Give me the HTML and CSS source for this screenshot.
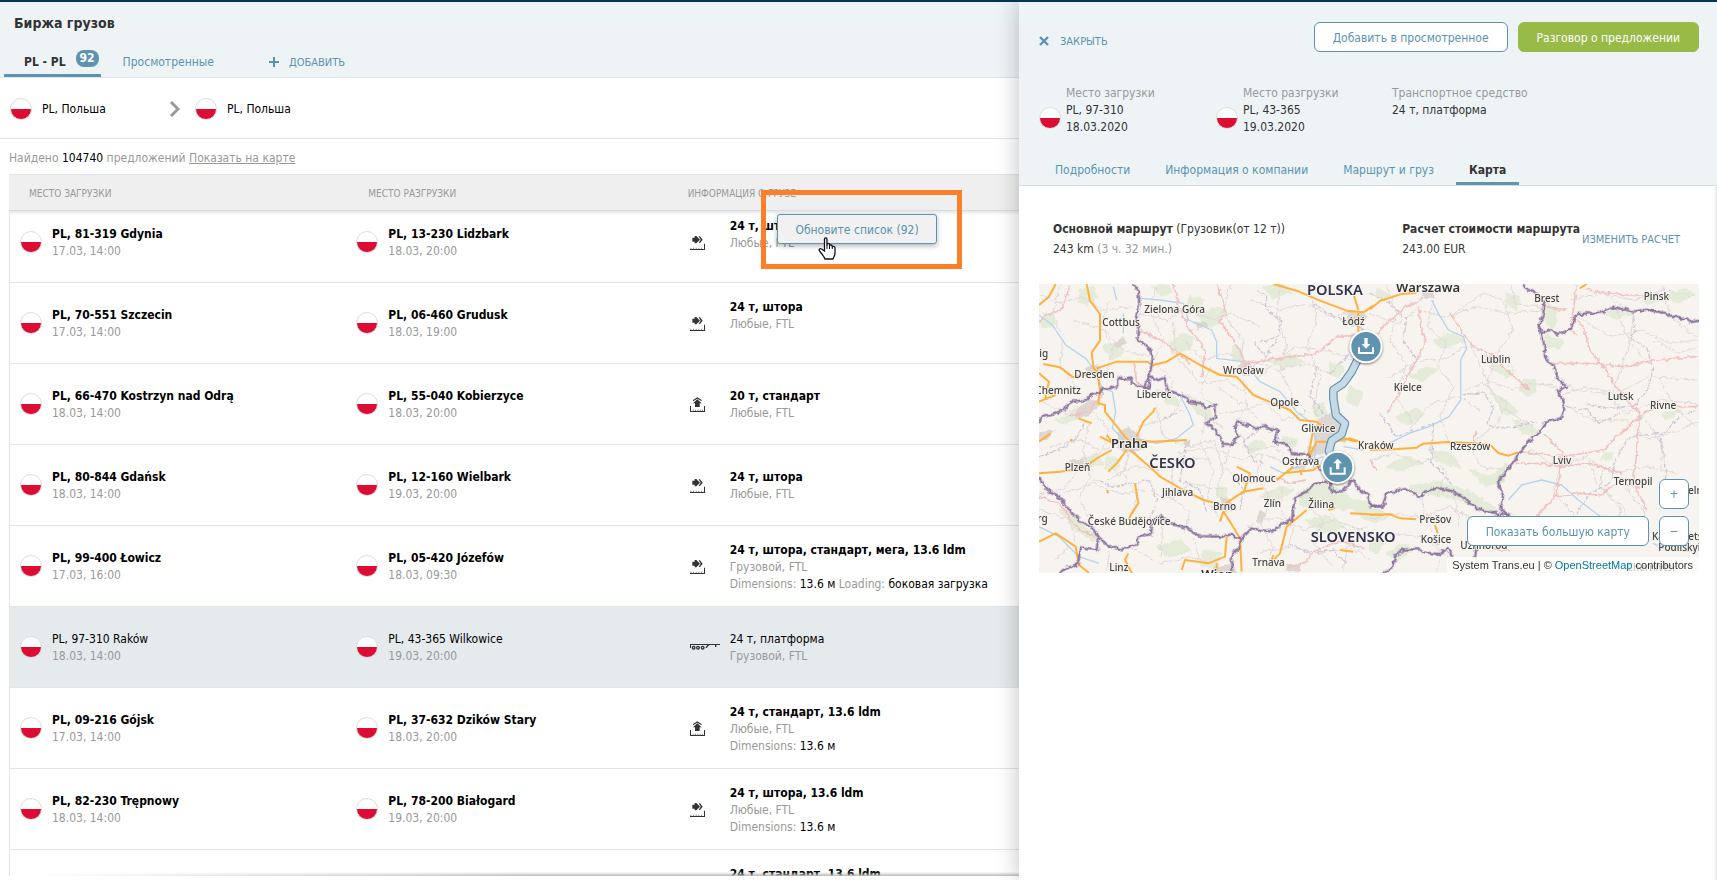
FILE: index.html
```html
<!DOCTYPE html>
<html lang="ru">
<head>
    <meta charset="UTF-8">
    <title>Биржа грузов</title>
    <link rel="stylesheet" href="styles.css">
</head>
<body>
    <svg class="sprite" aria-hidden="true">
        <symbol id="icon-side" viewBox="0 0 45 45">
            <path d="M7 8h7V3h5l11 11-11 11h-5v-5H7z"/>
            <path d="M26 4h4l8 10-8 10h-4l6-10z"/>
            <path d="M0 42h42V26h3v19H0z"/>
            <path class="ticks" d="M1 38h3v4H1zM9 38h3v4H9zM17 38h3v4h-3zM25 38h3v4h-3zM33 38h3v4h-3z"/>
        </symbol>
        <symbol id="icon-top" viewBox="0 0 45 45">
            <path d="M22 1l13 8v4L22 5 9 13V9z"/>
            <path d="M22 7l13 12h-6v11H15V19H9z"/>
            <path d="M0 27h3v15h39V27h3v18H0z"/>
            <path class="ticks" d="M8 38h3v4H8zM15 38h3v4h-3zM22 38h3v4h-3zM29 38h3v4h-3zM36 38h3v4h-3z"/>
        </symbol>
        <symbol id="icon-platform" viewBox="0 0 90 24">
            <path d="M0 3h90v3H58l-8 9-4-1 6-8H3v9H0zM75 6h4v6h-4z"/>
            <g fill="none" stroke="#333" stroke-width="4"><circle cx="11" cy="14" r="4"/><circle cx="24" cy="14" r="4"/><circle cx="38" cy="14" r="4"/></g>
        </symbol>
    </svg>
    <div class="page">
        <main class="list">
            <header class="list-header">
                <h1>Биржа грузов</h1>
                <nav class="tabs">
                    <a href="#" class="tab active">PL - PL <span class="count">92</span></a>
                    <a href="#" class="tab">Просмотренные</a>
                    <button class="add-btn"><svg width="10" height="10" viewBox="0 0 10 10"><path d="M4 0h2v4h4v2H6v4H4V6H0V4h4z"/></svg>ДОБАВИТЬ</button>
                </nav>
            </header>
            <div class="route-filter">
                <div class="point"><span class="flag"></span>PL, Польша</div>
                <svg class="chevron" width="11" height="18" viewBox="0 0 11 18"><path d="M2 2l7 7-7 7" fill="none" stroke="#999" stroke-width="3"/></svg>
                <div class="point"><span class="flag"></span>PL, Польша</div>
            </div>
            <p class="found">Найдено <span>104740</span> предложений <a href="#">Показать на карте</a></p>
            <div class="offers-wrap">
                <table class="offers">
                    <thead>
                        <tr>
                            <th class="col-from">МЕСТО ЗАГРУЗКИ</th>
                            <th class="col-to">МЕСТО РАЗГРУЗКИ</th>
                            <th class="col-cargo">ИНФОРМАЦИЯ О ГРУЗЕ</th>
                        </tr>
                    </thead>
                    <tbody>
                        <tr class="scrolled">
                            <td><div class="place"><span class="flag"></span><div><b>PL, 81-319 Gdynia</b><br>17.03, 14:00</div></div></td>
                            <td><div class="place"><span class="flag"></span><div><b>PL, 13-230 Lidzbark</b><br>18.03, 20:00</div></div></td>
                            <td><div class="cargo"><svg class="load-icon"><use href="#icon-side"/></svg><div><b>24 т, штора</b><br>Любые, FTL<br>&nbsp;</div></div></td>
                        </tr>
                        <tr>
                            <td><div class="place"><span class="flag"></span><div><b>PL, 70-551 Szczecin</b><br>17.03, 14:00</div></div></td>
                            <td><div class="place"><span class="flag"></span><div><b>PL, 06-460 Grudusk</b><br>18.03, 19:00</div></div></td>
                            <td><div class="cargo"><svg class="load-icon"><use href="#icon-side"/></svg><div><b>24 т, штора</b><br>Любые, FTL<br>&nbsp;</div></div></td>
                        </tr>
                        <tr>
                            <td><div class="place"><span class="flag"></span><div><b>PL, 66-470 Kostrzyn nad Odrą</b><br>18.03, 14:00</div></div></td>
                            <td><div class="place"><span class="flag"></span><div><b>PL, 55-040 Kobierzyce</b><br>18.03, 20:00</div></div></td>
                            <td><div class="cargo"><svg class="load-icon"><use href="#icon-top"/></svg><div><b>20 т, стандарт</b><br>Любые, FTL</div></div></td>
                        </tr>
                        <tr>
                            <td><div class="place"><span class="flag"></span><div><b>PL, 80-844 Gdańsk</b><br>18.03, 14:00</div></div></td>
                            <td><div class="place"><span class="flag"></span><div><b>PL, 12-160 Wielbark</b><br>19.03, 20:00</div></div></td>
                            <td><div class="cargo"><svg class="load-icon"><use href="#icon-side"/></svg><div><b>24 т, штора</b><br>Любые, FTL</div></div></td>
                        </tr>
                        <tr>
                            <td><div class="place"><span class="flag"></span><div><b>PL, 99-400 Łowicz</b><br>17.03, 16:00</div></div></td>
                            <td><div class="place"><span class="flag"></span><div><b>PL, 05-420 Józefów</b><br>18.03, 09:30</div></div></td>
                            <td><div class="cargo"><svg class="load-icon"><use href="#icon-side"/></svg><div><b>24 т, штора, стандарт, мега, 13.6 ldm</b><br>Грузовой, FTL<br>Dimensions: <span>13.6 м</span> Loading: <span>боковая загрузка</span></div></div></td>
                        </tr>
                        <tr class="selected">
                            <td><div class="place"><span class="flag"></span><div><b>PL, 97-310 Raków</b><br>18.03, 14:00</div></div></td>
                            <td><div class="place"><span class="flag"></span><div><b>PL, 43-365 Wilkowice</b><br>19.03, 20:00</div></div></td>
                            <td><div class="cargo"><svg class="load-icon platform"><use href="#icon-platform"/></svg><div><b>24 т, платформа</b><br>Грузовой, FTL</div></div></td>
                        </tr>
                        <tr>
                            <td><div class="place"><span class="flag"></span><div><b>PL, 09-216 Gójsk</b><br>17.03, 14:00</div></div></td>
                            <td><div class="place"><span class="flag"></span><div><b>PL, 37-632 Dzików Stary</b><br>18.03, 20:00</div></div></td>
                            <td><div class="cargo"><svg class="load-icon"><use href="#icon-top"/></svg><div><b>24 т, стандарт, 13.6 ldm</b><br>Любые, FTL<br>Dimensions: <span>13.6 м</span></div></div></td>
                        </tr>
                        <tr>
                            <td><div class="place"><span class="flag"></span><div><b>PL, 82-230 Trępnowy</b><br>18.03, 14:00</div></div></td>
                            <td><div class="place"><span class="flag"></span><div><b>PL, 78-200 Białogard</b><br>19.03, 20:00</div></div></td>
                            <td><div class="cargo"><svg class="load-icon"><use href="#icon-side"/></svg><div><b>24 т, штора, 13.6 ldm</b><br>Любые, FTL<br>Dimensions: <span>13.6 м</span></div></div></td>
                        </tr>
                        <tr>
                            <td></td>
                            <td></td>
                            <td><div class="cargo"><svg class="load-icon"></svg><div><b>24 т, стандарт, 13.6 ldm</b><br>&nbsp;<br>&nbsp;</div></div></td>
                        </tr>
                    </tbody>
                </table>
            </div>
            <div class="highlight"></div>
            <button class="refresh-btn">Обновите список (92)</button>
            <svg class="hand" width="18" height="23" viewBox="0 0 18 23">
                <path d="M6.500 14V2.500C6.500 .3 9 .3 9 2.500V9 7.500c0-1.500 2.500-1.500 2.500 0V9c0-1.500 2.700-1.300 2.700.3v1c0-1.400 2.800-1.200 2.800.5V16c0 3-1.500 4-2 6H7c-.5-2-3-5-5.500-8-1-1.500.5-3 2-2z" fill="#fff" stroke="#112" stroke-width="1.300"/>
                <path d="M9 9v3M11.500 9v3M14.300 10v2" stroke="#112"/>
            </svg>
        </main>
        <aside class="drawer">
            <header class="drawer-header">
                <div class="actions">
                    <button class="close-btn"><svg width="10" height="10" viewBox="0 0 10 10"><path d="M1 1l8 8M9 1l-8 8" stroke="#5b93b0" stroke-width="2.400"/></svg>ЗАКРЫТЬ</button>
                    <button class="btn">Добавить в просмотренное</button>
                    <button class="btn green">Разговор о предложении</button>
                </div>
                <div class="summary">
                    <div class="stop"><span class="flag"></span><div><em>Место загрузки</em><br>PL, 97-310<br>18.03.2020</div></div>
                    <div class="stop"><span class="flag"></span><div><em>Место разгрузки</em><br>PL, 43-365<br>19.03.2020</div></div>
                    <div><em>Транспортное средство</em><br>24 т, платформа</div>
                </div>
                <nav class="drawer-tabs">
                    <a href="#">Подробности</a>
                    <a href="#">Информация о компании</a>
                    <a href="#">Маршрут и груз</a>
                    <a href="#" class="active">Карта</a>
                </nav>
            </header>
            <section class="route">
                <div class="route-main"><b>Основной маршрут</b> (Грузовик(от 12 т))<br>243 km <em>(3 ч. 32 мин.)</em></div>
                <div class="route-cost"><b>Расчет стоимости маршрута</b><br>243.00 EUR</div>
                <button class="recalc-btn">ИЗМЕНИТЬ РАСЧЕТ</button>
            </section>
            <div class="map">
                <svg class="map-canvas" viewBox="27 12 1980 867" preserveAspectRatio="xMidYMid slice">
                    <!-- makes hand-drawn lines wander like real coastlines and roads -->
                    <filter id="wander" x="0" y="0" width="100%" height="100%">
                        <feTurbulence type="fractalNoise" baseFrequency="0.06" numOctaves="3" seed="4"/>
                        <feDisplacementMap in="SourceGraphic" scale="16" xChannelSelector="R" yChannelSelector="G"/>
                    </filter>
                    <rect x="27" y="12" width="1980" height="867" fill="#f7f4ef"/>
                    <g filter="url(#wander)">
                    <!-- forests -->
                    <g class="forest">
                        <path d="M150 30l40-10 10 30-30 25-25-10zM370 20l40-8 15 20-30 15zM480 50l40 10-10 40-35-5zM420 185l40-25 30 15-10 30-50 15zM510 110l50-30 25 10-15 40-40 10zM40 100l30 5 5 30-40 10zM220 200l40-10 20 30-35 20zM610 200l20 5 10 30-30 10zM700 20l60-5 20 20-50 20zM720 240l60-15 40 20-60 20zM380 330l50 20 20 25-40-5zM480 350l50 30 20 40-45-20zM80 420l60-30 50-10-40 35-50 15zM150 540l50-20 20 30-50 15zM230 530l40 10-10 30-35-5zM90 690l50 20 30 40 40 20-20 15-60-40zM380 800l70-20 30 30-60 20zM520 810l50 10-10 40-45-5zM640 500l50-20 20 20-50 20zM690 650l60-30 40 10-50 30zM560 620l30 5-5 30-25-5zM800 640l70-30 60 20 60 50-50 10-60-20-60 10zM830 720l60-10 50 30-70 20zM900 250l40 10-10 30-30-5zM850 380l30-10 10 30-30 10zM760 470l40 10-10 20-35-5zM960 320l40 20-20 40-30-20zM960 660l60 10 60 40-50 20-50-30z"/>
                        <path transform="translate(1020)" d="M20 25l40 20-10 15-35-15zM190 180l60-20 30 25-60 20zM410 45l40 5-10 35-30-10zM530 65l30 25-10 60-25-30zM530 165l50 20-10 20-40-5zM710 100l60-15 15 20-50 10zM820 60l40-20 15 20-40 10zM890 45l60-20 20 20-50 25zM120 290l50-30 30 10-40 30zM370 250l60 30-20 10-45-25zM455 300l40 0 5 35-30 15-20-20zM80 410l60-25 20 20-50 30zM370 340l50 30 20 30-40 0zM430 420l50 20 30 20-50 0zM180 510l60 10 30 40-60-15zM50 560l60-30 50 20-70 20zM300 570l60 20 50-40-10 60-60 5zM120 620l80-15 100 30 80 55-30 5-90-40-120-20zM330 725l30 10-10 30-25-10zM700 520l30 0-10 20-25-5zM880 400l50-10-20 20-25 5zM50 820l50-30 30 20-50 30zM0 760l40 30-20 30-20-10zM470 710l60 20 50 60-50-20z"/>
                    </g>
                    <!-- towns -->
                    <g class="town">
                        <path d="M265 455l35-15 30 30 10 40-60 10-20-25zM140 385l50-30 25 15-40 40-40 5zM165 265l40-15 10 20-40 15zM490 125l40 0 5 15-35 10zM620 255l30-15 25 25-20 25-30-10zM860 420l40-20 40 30 10 60-30-10-40 30-30-30zM950 100l40-8 20 20-25 30-30-5zM570 650l35 10 5 30-30 5zM830 500l40-10 20 30-50 10zM690 690l20 10-20 35-10-20zM250 190l30-20 10 20-30 15zM27 455l50-5-30 30-20 5zM120 540l40 0 10 30-40 0zM800 545l30 10-10 20-30-5zM550 860l60-10 10 29-70 0zM770 855l40 0 0 15-40 5zM465 480l15 0 0 25-15 0z"/>
                        <path transform="translate(1020)" d="M155 35l30-5 10 20-30 10zM350 225l20 5-5 20-20-5zM560 545l30-10 10 25-30 5zM740 335l20 0 5 20-20 0zM190 770l20 5-5 20-20-5zM800 405l20 0 0 15-20 0zM300 490l25-8 15 12-30 10z"/>
                    </g>
                    <!-- local roads -->
                    <g class="minor">
                        <path d="M27 40l60 30 70-20 60 40 90-10M90 12l-20 90 30 80-10 70 60 80M130 120l90 30 60 60 80 20M240 60l-30 80 40 60-20 80M330 100l80 20 50-30 90 30 50-20 90 40M380 12l-20 80 40 90-30 60 60 60-20 60M460 180l60 60 70-20 60 30M430 130l10 100 70 80 80-10 60 40M600 12l-20 90 60 80-10 70M660 60l90 30 80-20 70 40 50-10M750 12l-10 90 30 90-20 80 40 80 50 50M840 30l20 90-30 80 40 90-20 90 30 60M660 240l80 30 90-20 70 30M680 300l60-60 60-40 90 10 80 30M540 260l-30 80 60 60 80-10 60-30M640 300l10 80-40 60 50 70 80-10 40 50M700 360l60 60 70-20M560 320l90 60 80 90 70 20"/>
                        <path d="M27 360l80 40 60-30 70 80-20 60-70 60-50 60-90 20M60 500l90-20 60 30 60-10M180 420l-20 90 20 80-30 60 30 80M230 600l80-40 80 10 60-40 90 10M300 500l-20 80 40 70-20 70M100 640l90-30 80 30 70-10 100 30M360 520l70 50-10 80 60 50-20 60M330 440l90-30 50-70 30 60 80 40M380 380l20 90 80 30 70-20 30 90-20 60 30 70M440 520l100-20 90 40 70-20 90 40M530 400l-20 90 40 80-20 90 50 70M600 490l-20 70 60 50 90-20 60 20M420 660l60-50 100 20M700 520l-20 60 40 80-30 70 40 70-20 70M650 740l90-30 80 40 90-30 90 30M760 620l-10 70 40 60-20 60M820 660l60 60-30 70 60 70M900 700l60 60 50-20M27 690l90 30 20 60-60 60M240 810l-10 60M300 800l90 50 90-20 60 20M400 730l-10 100M490 770l20 80M680 820l90-20 100 20 90-20 60 40M960 760l-20 110"/>
                        <path transform="translate(1020)" d="M0 100l80 30 60-40 90 20 90-30 90 20 110-10M50 12l30 90-20 80 50 70-30 100 50 80M190 60l-20 80 60 50-30 70 50 60-40 90 30 90M250 100l90-60 60 20 30 90-50 70 60 60M290 195l-60 40-90 10-90 50M300 190l50 110 80 30 60-20 70 10M370 240l-20 80 40 60 100 60M280 330l60-20 70 60-30 60-60 50M120 450l60-80 90-20 60 40M190 430l-10 90 50 60-30 70M300 500l30 60 80 10-20 50M0 540l80-20 60 30 60-20M420 12l20 60 80 10M600 60l90-20 100 20 90-30 90 20M620 110l100 60 90-20 90 40 80-10M700 40l90 60-10 90 60 60M740 90l40 100-50 140 10 60M550 270l60 60 100 10 60 60 90-40 120 10M560 350l90-30 90 20 100-50 140 10M590 380l80 40 100 0 60 60 100-30 60-30M480 510l80 50 90-30 80 50 100-20 90 20M570 560l-20 80 60 60 40 60M650 520l30 90 80 70 20 80M760 610l60 80 0 60M700 560l-10 60 60 60-10 80M0 720l60-20 100 10 80-30 90 50M60 760l90 10 90 60M210 830l-10 40M160 650l0 60 40 60M250 640l20 100M420 700l90 60 80 0M830 420l50 80-10 80M880 20l20 90 80 60M850 180l80 40 50-20M870 300l50 90 60 50"/>
                    </g>
                    <g class="district">
                        <path d="M680 30l30 20-5 40 50 30-10 50-70 20 30 40M850 70l60 40 70 20 40 40M640 270l60-30 40-60M690 450l-50 30 30 60 30 10M400 420l60-30M27 530l60-20 50-30 30-60M190 600l60 20 110-20 20 60-20 60M610 590l30 40-10 60M860 260l-20 90 50 60M900 280l60-60M470 490l-20 110 60 30 20 70M780 790l60 30 70-10 40 40"/>
                        <path transform="translate(1020)" d="M0 40l60 30 50 50-10 60 40 60-30 50M280 345l60-10 30 50-20 50 60 10 90-20M790 95l5 60-15 20 50 30 20 60-15 60-40 50-60 10-90-10M590 380l60 10 40 40 60-30M870 460l-90 10-40 60-20 80-60 30-40 60M980 390l-50 20-60 60 20 100-15 90M30 400l50 70 110-40-5 120 60 60"/>
                    </g>
                    </g>
                    <!-- rivers -->
                    <g class="river">
                        <path d="M27 105l40 30 40 60 60 40 30 40 20 50 30 10 10 60-10 50 40 40 50 60M330 55l60 5 70 10 15 50 70 30 15 35 0 50 80 10 50 60 60 30 50 60 40 30 20 60-10 80M300 470l80 20 60-15 50-40-10-30-30-60M27 740l60 30 60 60 60 20M250 20l10 40M280 100l0 60M720 560l40 20 60-30 60-20M940 500l60 10"/>
                        <path transform="translate(1020)" d="M185 60l20 40 30 50 45 20 10 35-18 35 0 120-35 50-60 30-60 20-60 30M415 660l40-45 60-15 60 15 50 45 80 60M850 790l40 20 90 5"/>
                    </g>
                    <!-- main roads -->
                    <g class="primary" filter="url(#wander)">
                        <path d="M120 12l-20 70-60 30-13 20M430 12l15 60 30 70 50 70-10 80M560 12l30 90-20 20 60 90 20 50M330 150l80 40 70 60M640 255l30-10 120-15 70-10 60-50 70-5M900 540l60-10M120 410l60-20 40-50M27 650l60 20 60 80 50 20M740 590l30 20 60-10M770 865l60-20 20-30 80-30 70 20M310 250l10 50 30 30"/>
                        <path transform="translate(1020)" d="M0 190l50-60 60-50 50-25M145 80l10 60 12 40-25 60-30 50-30 60-30 50M240 100l40 60 30 40 50 20 60 60 60 50M620 12l-10 80-10 60M540 250l130 0 90 10 100-20 120-10M600 110l40 30 20 70 40 50 40 60 40 50 30 30M650 30l120 15 90 0M530 80l60 10M430 550l80 0 60 10 90-10 100 30M450 515l80 10 80 0 90-15 40-40 80-70 60-30M570 530l0 60-15 60-55 60M580 520l-60-60M550 650l80-10 60 5 60-40 60 20M810 400l-10 120-10 90 40 80M920 380l65 0M310 490l5-35M0 540l20 30M590 150l30 10M330 780l60 30 30 0"/>
                    </g>
                    <!-- motorways -->
                    <g class="motorway">
                        <path d="M27 75l30-25 20-38M170 12l10 50 30 40 0 80-25 35 5 45 10 15-70 15-40-30-50-10M200 265l60-20 90 0 20 10 40-10 40-25 60 35 60 30 50 5 50 55 60 25 50 20 30 30 50 5 30 25M200 270l10 60-5 40 20 5 0 20 60 75 20 20M320 470l20-45 30-30 5-12M310 480l60 5 100-5M145 415l40 15M27 485l35-25M120 480l8 0M210 470l40 20-20-25M300 510l70 60 20 20 70 40 60 30 60 15 60-40 60-10M245 510l-45 25-40 30-70 10-63 5M290 510l-30 40-25 25M570 725l10-30 20 30 30 50 5 100M315 610l10 60-20 30-10 20M230 630l5 10M27 280l30 25-10 40 0 10M27 365l50-20M27 785l50-25 60 40 10 55 30 24M295 820l-10 20 20 39M455 870l10-30 70 10 50-20 5-60M560 850l0 29M620 560l40 20-20 60M740 600l50-40M760 580l90-10 20-15M810 570l5 15M830 545l30-60 50 0 50-10 30 10M850 450l-15 75M730 12l70 20 70 30 80 30 50 5 30-20M985 92l0 70M970 40l15 50M830 690l-60 50-20 80-30 30M895 690l20-5M960 700l100 5M940 475l40 10M930 810l40 5M730 825l-5 15"/>
                        <path transform="translate(1020)" d="M0 88l30-25 60-20 50-5M0 510l70-2 70-5 20-12 70-5 70 3 60 5 25 25 30 8 30-10M0 705l60-2 30 12 48 3M195 735l8 25M630 25l20-13"/>
                    </g>
                    <!-- state borders -->
                    <g class="border" filter="url(#wander)">
                        <path d="M308 12l17 18 3 45-10 35 7 15-3 55 33 20 13 35-10 55-18 33-38-13 0-18-20 8-20-8 0 25-22 8-20 0-12 15-25 5-15 15-40 5-25 20-20 15-45 10-15 17-33 0"/>
                        <path d="M340 320l18 3 2-33 25 10 18-7 10 37 42 15 30 22 28 3 14 14 30-10 0 38-30 18 30 20 25 45 20 0 25-28-15-28 15-13 55 20 20-10 20 12 22 0-12 38 38 8 15 25 50 5 35 45 25 25 10 40 35 0 30-35 15 30 30 15 5 35 35 0"/>
                        <path d="M890 605l-40 7-20 23-35 20-10 65-35 15-20 20-35-5-30-5-30 30-10 30-20 20 2 54"/>
                        <path d="M27 590l20 35 45 30 25 35 35 35 28 10 25 35 30 28 40 10 45-15 8-25 35-5 5-40 25-15 20 20 55 15 40 25 70 2 25-7 12 12 25-2M205 760l-5 50-50-5-5 45-45 20-15 9"/>
                        <path transform="translate(1020)" d="M0 675l38 5 10-38 32-10 25-8 45 30 15-20 40-10 45 10 48 33 45 28 40 5 35 6M42 879l28-20 5-30 25-20 50-2 10 10 50 5 20-15 20 20M320 795l-5 40"/>
                        <path transform="translate(1020)" d="M460 12l5 13 35 15 22 30-2 35-13 25 8 30 8 40 2 30 28 35 14 38 24 17-28 12 20 38-10 45-43 10-22 30-45 45-45 60-34 48 15 37-5 45 24 20-12 10M515 160l30-10 20 15 35-18 20-45 70-4 45-16 55 12 40-5 50 9 50 18 25 0 10 10 22-4"/>
                    </g>
                    <g class="track">
                        <path class="outer" d="M985 235l-20 40-25 35-30 20 0 25 8 50 27 25-10 32-30 20-8 30 15 40"/>
                        <path class="inner" d="M985 235l-20 40-25 35-30 20 0 25 8 50 27 25-10 32-30 20-8 30 15 40"/>
                    </g>
                    <g class="city">
                        <text x="343" y="99">Zielona Góra</text>
                        <text x="217" y="139">Cottbus</text>
                        <text x="28" y="231">ig</text>
                        <text x="133" y="294">Dresden</text>
                        <text x="16" y="341">Chemnitz</text>
                        <text x="320" y="354">Liberec</text>
                        <text x="579" y="281">Wrocław</text>
                        <text x="721" y="377">Opole</text>
                        <text x="937" y="136">Łódź</text>
                        <text x="814" y="457">Gliwice</text>
                        <text x="984" y="506">Kraków</text>
                        <text x="756" y="555">Ostrava</text>
                        <text x="607" y="605">Olomouc</text>
                        <text x="104" y="573">Plzeň</text>
                        <text x="396" y="647">Jihlava</text>
                        <text x="549" y="690">Brno</text>
                        <text x="701" y="682">Zlín</text>
                        <text x="835" y="683">Žilina</text>
                        <text x="173" y="735">České Budějovice</text>
                        <text x="22" y="727">rg</text>
                        <text x="238" y="873">Linz</text>
                        <text x="667" y="859">Trnava</text>
                        <text x="1091" y="332">Kielce</text>
                        <text x="1353" y="250">Lublin</text>
                        <text x="1513" y="65">Brest</text>
                        <text x="1841" y="61">Pinsk</text>
                        <text x="1733" y="360">Lutsk</text>
                        <text x="1860" y="387">Rivne</text>
                        <text x="1260" y="511">Rzeszów</text>
                        <text x="1568" y="553">Lviv</text>
                        <text x="1751" y="614">Ternopil</text>
                        <text x="1908" y="642">Khmeln</text>
                        <text x="1168" y="730">Prešov</text>
                        <text x="1172" y="788">Košice</text>
                        <text x="1291" y="807">Uzhhorod</text>
                        <text x="1866" y="779">Kamianets</text>
                        <text x="1885" y="814">Podilskyi</text>
                        <text x="1790" y="874">Chernivtsi</text>
                    </g>
                    <g class="capital">
                        <text x="243" y="504">Praha</text>
                        <text x="1098" y="37">Warszawa</text>
                        <text x="514" y="896">Wien</text>
                    </g>
                    <g class="country">
                        <text x="831" y="44">POLSKA</text>
                        <text x="358" y="563">ČESKO</text>
                        <text x="842" y="787">SLOVENSKO</text>
                    </g>
                    <g class="pin">
                        <circle cx="1008" cy="200" r="47"/>
                        <path d="M1003 174h10v18h8l-13 14-13-14h8zM984 202h6v14h36v-14h6v20h-48z"/>
                        <circle cx="923" cy="562" r="47"/>
                        <path d="M918 568h10v-18h8l-13-14-13 14h8zM899 562h6v16h36v-16h6v22h-48z"/>
                    </g>
                </svg>
                <div class="map-controls">
                    <button class="btn show-map">Показать большую карту</button>
                    <div class="zoom">
                        <button class="btn" aria-label="Приблизить">+</button>
                        <button class="btn" aria-label="Отдалить">−</button>
                    </div>
                </div>
                <div class="attribution">System Trans.eu | © <a href="#">OpenStreetMap</a> contributors</div>
            </div>
        </aside>
    </div>
</body>
</html>
```

FILE: styles.css
```css
* {
    box-sizing: border-box;
}
body {
    margin: 0;
    background: #fff;
    color: #333;
    font-family: Tahoma, "DejaVu Sans Condensed", "Noto Sans", sans-serif;
    font-size: 12px;
    line-height: 17px;
}
a {
    color: #5b93b0;
    text-decoration: none;
}
button {
    font-family: inherit;
    font-size: 12px;
    color: #5b93b0;
    background: none;
    border: none;
    padding: 0;
    cursor: pointer;
}
em {
    font-style: normal;
    color: #999;
}
.sprite {
    position: absolute;
    width: 0;
    height: 0;
}
.page {
    display: grid;
    grid-template-columns: 1019fr 698fr;
    height: 100vh;
    border-top: 2px solid #003653;
    overflow: hidden;
}
.flag {
    flex: none;
    width: 22px;
    height: 22px;
    border: 1px solid #ddd;
    border-radius: 50%;
    background: linear-gradient(#fff 50%, #dc0c33 50%);
}

/* offers list */
.list {
    position: relative;
    display: flex;
    flex-direction: column;
    min-width: 0;
    min-height: 0;
    padding-bottom: 4px;
}
.list-header {
    background: #eef4f6;
    border-bottom: 1px solid #dfe6eb;
    padding: 12px 4px 0;
}
h1 {
    margin: 0 0 18px 10px;
    font-size: 14px;
    line-height: 18px;
}
.tabs {
    display: flex;
    height: 27px;
}
.tab {
    padding: 4px 20px 0 22px;
}
.tab.active {
    display: flex;
    gap: 10px;
    padding: 4px 2px 0 20px;
    border-bottom: 3px solid #5f94b1;
    color: #333;
    font-weight: bold;
}
.count {
    height: 17px;
    margin-top: -4px;
    padding: 0 4px;
    border-radius: 8px;
    background: #5f94b1;
    color: #fff;
}
.add-btn {
    display: flex;
    align-items: center;
    gap: 10px;
    height: 24px;
    margin-left: 35px;
    font-size: 11px;
}
.add-btn svg {
    fill: #5b93b0;
}
.route-filter {
    display: flex;
    align-items: center;
    height: 61px;
    padding: 2px 0 0 10px;
    border-bottom: 1px solid #dfe6eb;
    color: #000;
}
.point {
    display: flex;
    align-items: center;
    gap: 10px;
}
.point:first-child {
    width: 159px;
}
.chevron {
    margin-right: 15px;
}
.found {
    margin: 11px 9px 7px;
    color: #999;
}
.found span {
    color: #000;
}
.found a {
    color: #999;
    text-decoration: underline;
}
.offers-wrap {
    position: relative;
    flex: 1;
    min-height: 0;
    margin-left: 9px;
    overflow: hidden;
}
.offers-wrap::after {
    content: "";
    position: absolute;
    inset: auto 0 0 20px;
    height: 4px;
    background: linear-gradient(transparent, #bbb);
    mask-image: linear-gradient(to right, transparent, #000 50%);
}
.offers {
    width: 100%;
    border-collapse: separate;
    border-spacing: 0;
    table-layout: fixed;
}
.offers th {
    height: 37px;
    padding: 2px 0 0 20px;
    background: #efefef;
    border-top: 1px solid #dfe6eb;
    border-bottom: 1px solid #d5dde2;
    color: #999;
    font-size: 10px;
    font-weight: normal;
    text-align: left;
}
.offers .col-from {
    width: 33.4%;
}
.offers .col-to {
    width: 33%;
    padding-left: 22px;
}
.offers .col-cargo {
    padding-left: 8px;
}
.offers thead {
    box-shadow: 0 2px 3px rgba(0, 0, 0, 0.1);
}
.offers td {
    height: 81px;
    padding: 0 0 0 10px;
    border-bottom: 1px solid #dfe6eb;
    color: #999;
    white-space: nowrap;
}
.offers td:first-child {
    border-left: 1px solid #dfe6eb;
}
.offers .scrolled td {
    height: 72px;
    padding-bottom: 9px;
}
.offers b,
.offers td div span {
    color: #000;
}
.place,
.cargo {
    display: flex;
    align-items: center;
    gap: 10px;
}
.place > div,
.cargo > div {
    padding-top: 2px;
}
.load-icon {
    flex: none;
    width: 15px;
    height: 15px;
    margin-right: 15px;
    fill: #333;
}
.load-icon.platform {
    width: 30px;
    height: 8px;
    margin-right: 0;
}
.ticks {
    fill: #888;
}
.selected td {
    background: #e5eaed;
}
.selected b {
    font-weight: normal;
}

/* floating refresh button */
.highlight {
    position: absolute;
    left: 761px;
    top: 188px;
    width: 201px;
    height: 79px;
    border: 5px solid #ff7f27;
}
.refresh-btn {
    position: absolute;
    left: 777px;
    top: 212px;
    width: 160px;
    height: 30px;
    padding-top: 2px;
    background: #f1f1f1;
    border: 1px solid #5b93b0;
    border-radius: 3px;
    box-shadow: 0 2px 5px rgba(0, 0, 0, 0.3);
}
.hand {
    position: absolute;
    left: 818px;
    top: 235px;
}

/* offer drawer */
.drawer {
    position: relative;
    min-width: 0;
    background: #fff;
    box-shadow: 0 0 22px rgba(0, 0, 0, 0.25), inset -3px 0 3px -2px #ddd;
}
.drawer-header {
    padding: 20px 18px 0 20px;
    background: #eef4f6;
    border-bottom: 1px solid #d3dde2;
}
.actions {
    display: flex;
    gap: 10px;
}
.close-btn {
    display: flex;
    align-items: center;
    gap: 11px;
    margin: 8px auto 0 0;
    font-size: 11px;
}
.btn {
    height: 30px;
    padding: 2px 18px 0;
    background: #fff;
    border: 1px solid #5b93b0;
    border-radius: 6px;
}
.btn.green {
    background: #98ba47;
    border-color: #98ba47;
    color: #fff;
}
.summary {
    display: grid;
    grid-template-columns: 177px 176px 1fr;
    margin-top: 33px;
}
.stop {
    display: flex;
    align-items: flex-end;
    gap: 5px;
}
.stop .flag {
    margin-bottom: 7px;
}
.drawer-tabs {
    display: flex;
    gap: 9px;
    margin-top: 17px;
    padding-left: 3px;
}
.drawer-tabs a {
    height: 32px;
    padding: 9px 13px 0;
    border-bottom: 3px solid transparent;
}
.drawer-tabs .active {
    border-color: #5f94b1;
    color: #333;
    font-weight: bold;
}
.route {
    display: flex;
    align-items: center;
    padding: 33px 20px 25px 34px;
    line-height: 20px;
    white-space: nowrap;
}
.route-main {
    flex: 1;
}
.recalc-btn {
    width: 117px;
    padding-left: 2px;
    font-size: 11px;
    text-align: left;
}
.map {
    position: relative;
    margin: 0 18px 0 20px;
    overflow: hidden;
}
.map-canvas {
    display: block;
    width: 100%;
    font-family: "Noto Sans", sans-serif;
}
.forest {
    fill: #e4ecd9;
    stroke: #e4ecd9;
    stroke-width: 6;
    stroke-linejoin: round;
}
.town {
    fill: #ddd6d1;
}
.minor,
.district,
.river,
.primary,
.motorway,
.border,
.track {
    fill: none;
    stroke-linejoin: round;
}
.minor {
    stroke: #e0d8d9;
    stroke-width: 3;
}
.district {
    stroke: #cfc6d6;
    stroke-width: 4;
    stroke-dasharray: 14 4;
}
.river {
    stroke: #b5d3ee;
    stroke-width: 4;
}
.primary {
    stroke: #f0c2c2;
    stroke-width: 5;
}
.motorway {
    stroke: #ffb13d;
    stroke-width: 6;
}
.border {
    stroke: #8d739e;
    stroke-width: 7;
}
.track .outer {
    stroke: #5f94b1;
    stroke-width: 26;
}
.track .inner {
    stroke: #c5dae4;
    stroke-width: 19;
}
.city text,
.capital text,
.country text {
    paint-order: stroke;
    stroke: #f7f4ef;
    stroke-width: 5;
}
.city {
    fill: #444;
    font-size: 30px;
    font-weight: 500;
}
.capital {
    fill: #333;
    font-size: 39px;
    font-weight: 600;
}
.country {
    fill: #33334d;
    font-size: 44px;
    font-weight: 600;
}
.pin circle {
    fill: #5f94b1;
    stroke: #fff;
    stroke-width: 6;
    filter: drop-shadow(0 3px 3px rgba(0, 0, 0, 0.5));
}
.pin path {
    fill: #fff;
}
.map-controls {
    position: absolute;
    right: 10px;
    bottom: 27px;
    display: flex;
    align-items: flex-end;
    gap: 10px;
}
.zoom {
    display: flex;
    flex-direction: column;
    gap: 7px;
}
.zoom .btn {
    width: 30px;
    padding: 0;
}
.attribution {
    position: absolute;
    right: 0;
    bottom: 0;
    padding: 0 6px 0 5px;
    background: rgba(255, 255, 255, 0.7);
    font-family: Arial, "Liberation Sans", sans-serif;
    font-size: 11px;
    line-height: 16px;
}
.attribution a {
    color: #0078a8;
}
```
